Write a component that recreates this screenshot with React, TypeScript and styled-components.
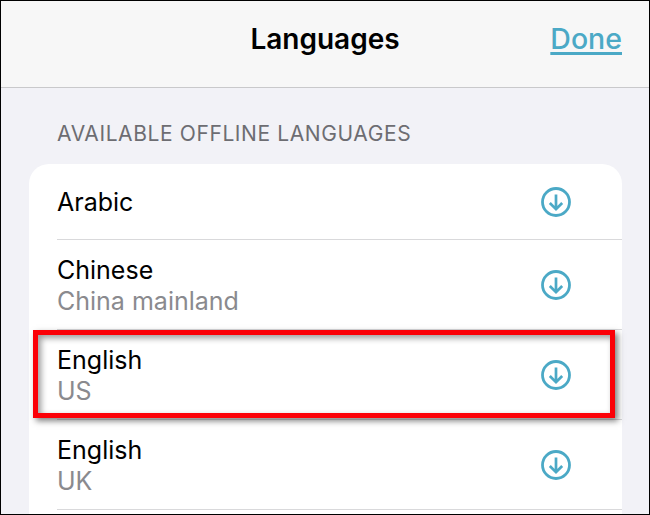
import * as React from 'react';
import styled, { createGlobalStyle } from 'styled-components';

const GlobalStyle = createGlobalStyle`
    html, body {
        margin: 0;
        padding: 0;
        background: #f2f2f7;
    }
`

interface ILanguage {
    name: string;
    region?: string;
}

const languages: ILanguage[] = [
    { name: 'Arabic' },
    { name: 'Chinese', region: 'China mainland' },
    { name: 'English', region: 'US' },
    { name: 'English', region: 'UK' },
];

function DownloadIcon() {
    return (
        <svg width="32" height="32" viewBox="0 0 32 32" fill="none" stroke="#4ba9c6">
            <circle cx="16" cy="16" r="13.5" strokeWidth="2.8" />
            <path d="M16 8.5V23M9.8 17L16 23.2L22.2 17" strokeWidth="2.7" />
        </svg>
    );
}

export default function App() {
    return (
        <Page>
            <GlobalStyle />
            <Header>
                <Title>Languages</Title>
                <Done>Done</Done>
            </Header>
            <SectionLabel>AVAILABLE OFFLINE LANGUAGES</SectionLabel>
            <Card>
                {languages.map((lang, i) => (
                    <Row key={i} $tall={!!lang.region}>
                        <RowText>
                            <Name>{lang.name}</Name>
                            {lang.region && <Region>{lang.region}</Region>}
                        </RowText>
                        <IconSlot><DownloadIcon /></IconSlot>
                    </Row>
                ))}
            </Card>
            <Highlight />
        </Page>
    );
}

const Page = styled.div`
    position: relative;
    width: 650px;
    height: 515px;
    box-sizing: border-box;
    border: 1px solid #000;
    overflow: hidden;
    background: #f2f2f7;
    font-family: Inter, "Liberation Sans", sans-serif;
    display: flex;
    flex-direction: column;
`

const Header = styled.header`
    flex: none;
    height: 87px;
    box-sizing: border-box;
    border-bottom: 1px solid #c9c9cb;
    background: #f7f7f7;
    display: flex;
    align-items: center;
    justify-content: center;
    position: relative;
`

const Title = styled.h1`
    margin: 0 0 10px 0;
    font-size: 28px;
    font-weight: 600;
    color: #000;
`

const Done = styled.a`
    position: absolute;
    right: 27px;
    top: 21px;
    font-size: 28.5px;
    line-height: 34px;
    font-weight: 500;
    color: #4ba9c6;
    text-decoration: underline;
    text-decoration-thickness: 3px;
    text-underline-offset: 3px;
`

const SectionLabel = styled.div`
    flex: none;
    margin: 34px 0 0 56px;
    font-size: 21px;
    line-height: 24px;
    font-weight: 400;
    letter-spacing: 0.6px;
    color: #6d6d72;
`

const Card = styled.section`
    flex: 1;
    margin: 18px 27px 0 28px;
    background: #fff;
    border-radius: 20px 20px 0 0;
`

const Row = styled.div<{ $tall: boolean }>`
    height: ${props => (props.$tall ? '90px' : '76px')};
    margin-left: 28px;
    padding-right: 50px;
    padding-top: ${props => (props.$tall ? '1px' : '0')};
    box-sizing: border-box;
    border-bottom: 1px solid #d9d9db;
    display: flex;
    align-items: center;
    justify-content: space-between;
`

const RowText = styled.div`
    display: flex;
    flex-direction: column;
    padding-top: 2px;
`

const Name = styled.span`
    font-size: 25px;
    line-height: 31px;
    color: #000;
`

const Region = styled.span`
    font-size: 25px;
    line-height: 31px;
    color: #8a8a8e;
`

const IconSlot = styled.div`
    display: flex;
`

const Highlight = styled.div`
    position: absolute;
    left: 32px;
    top: 329px;
    width: 582px;
    height: 88px;
    box-sizing: border-box;
    border: 5px solid #fb0007;
    box-shadow: 3px 3px 6px rgba(0, 0, 0, 0.5), inset 3px 3px 6px rgba(0, 0, 0, 0.4);
`
